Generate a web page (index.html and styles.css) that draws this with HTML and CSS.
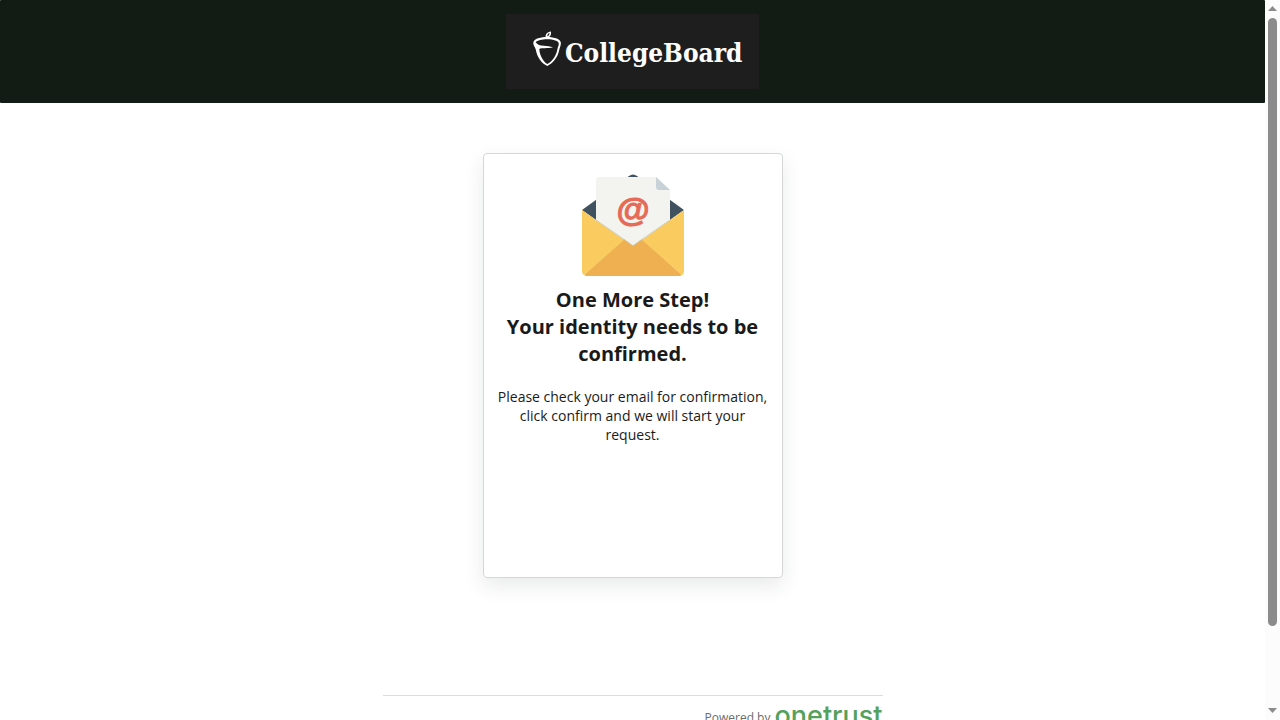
FILE: index.html
```html
<!DOCTYPE html>
<html lang="en">
<head>
<meta charset="utf-8">
<title>Identity confirmation</title>
<link rel="stylesheet" href="styles.css">
</head>
<body>
<div class="page">
  <header class="header">
    <div class="brand">
      <svg class="brand-icon" viewBox="0 0 28 36" aria-hidden="true">
        <path fill="#fff" d="M12.600 6.500C12.200 3 14 1 18 .4c.5 3.200-.8 5.200-3 6.100z"/>
        <path fill="#1e1e1e" d="M14.300 5.200C14.300 3.600 15 2.500 16.500 2c.1 1.500-.7 2.600-2.200 3.200z"/>
        <path fill="#fff" d="M14 6C22 6 27.900 8.300 27.900 12.100c0 2.700-1.100 4.200-1.600 6.700C24.900 26.500 19.800 32.500 14.300 35 8.600 32.500 4.200 26.500 2.800 18.800 2.300 16.300.3 15 .3 12.100.3 8.300 6 6 14 6z"/>
        <path fill="#1e1e1e" d="M2.600 11.200C4.500 9.300 9 8.300 14 8.300c6.500 0 11.800 1.500 11.800 4.500 0 1.700-.9 3-1.400 5.400C23.200 25 19.100 30.500 14.300 33 10.200 30.500 6.500 24 6.300 18c2.500-1.300 8-.3 13.700-1.400-2.500-1.500-6-1.600-9.200-1.800C7 14.500 4.500 13.800 2.600 11.200z"/>
      </svg>
      <span class="brand-name">CollegeBoard</span>
    </div>
  </header>
  <main class="main">
    <section class="card">
      <svg class="envelope" viewBox="0 0 102 102" aria-hidden="true">
        <path fill="#40525f" d="M0 36 47 2q4-3 8 0l47 34-51 36z"/>
        <path fill="#f3f4ef" d="M17 3h57l14 13v30L51 72 14 46V6q0-3 3-3z"/>
        <path fill="#c9d1d8" d="M74 3l14 13H77q-3 0-3-3z"/>
        <text class="at-sign" x="51" y="47" text-anchor="middle">@</text>
        <path fill="#efb051" d="M2 101 42 65l9 7 9-7 40 36-2 1H4z"/>
        <path fill="#facb5f" d="M0 36 42 66 2 101q-2-1-2-4zM102 36 60 66l40 35q2-1 2-4z"/>
        <path fill="none" stroke="#c9cbc4" stroke-width=".7" d="M14 46 51 71.500 88 46"/>
      </svg>
      <h1 class="title">One More Step!<br>Your identity needs to be confirmed.</h1>
      <p class="message">Please check your email for confirmation, click confirm and we will start your request.</p>
    </section>
  </main>
  <footer class="footer">
    <span class="powered">Powered by</span>
    <span class="vendor">onetrust</span>
  </footer>
</div>
<div class="scrollbar" aria-hidden="true">
  <svg class="arrow" viewBox="0 0 9 5"><path d="M0 5 4.500 0 9 5z"/></svg>
  <div class="track"><div class="thumb"></div></div>
  <svg class="arrow" viewBox="0 0 9 5"><path d="M0 0h9L4.500 5z"/></svg>
</div>
</body>
</html>
```
FILE: styles.css
```css
* { box-sizing: border-box; }

body {
  margin: 0;
  height: 100vh;
  overflow: hidden;
  display: flex;
  font-family: "Open Sans", sans-serif;
  color: #1a1a1a;
  background: #fff;
}

.page { flex: 1; overflow: hidden; }

.header {
  display: flex;
  justify-content: center;
  padding: 14px;
  background: #131c14;
  border-radius: 1px;
}

.brand {
  display: flex;
  width: 253px;
  height: 75px;
  padding: 17px 0 0 27px;
  gap: 4px;
  background: #1e1e1e;
}

.brand-icon { width: 28px; height: 36px; }

.brand-name {
  font: bold 26px/44px "DejaVu Serif Condensed", "DejaVu Serif", serif;
  color: #fff;
}

.main {
  display: flex;
  justify-content: center;
  padding: 50px 0 117px;
}

.card {
  width: 300px;
  min-height: 425px;
  padding: 20px 12px;
  text-align: center;
  border: 1px solid #d5d6d8;
  border-radius: 4px;
  box-shadow: 0 8px 20px rgba(40, 50, 60, 0.1);
}

.envelope { display: block; width: 102px; height: 102px; margin: 0 auto; }

.at-sign {
  font: bold 34px "Liberation Sans", sans-serif;
  fill: #e66a57;
  stroke: #e66a57;
  stroke-width: 1px;
}

.title { margin: 10px 0 20px; font-size: 20px; line-height: 27px; font-weight: 700; }

.message { margin: 0; font-size: 14px; line-height: 19px; }

.footer {
  display: flex;
  justify-content: flex-end;
  gap: 4px;
  max-width: 500px;
  margin: 0 auto;
  padding-top: 4px;
  border-top: 1px solid #dcdcdc;
}

.powered { font-size: 12px; line-height: 36px; color: #6b6b6b; }

.vendor { font: 500 27px/32px Inter, sans-serif; color: #54a15d; }

.scrollbar {
  display: flex;
  flex-direction: column;
  align-items: center;
  gap: 7px;
  width: 15px;
  padding: 6px 0 7px;
  background: #fcfcfc;
}

.arrow { width: 9px; height: 5px; fill: #8b8b8b; }

.track { flex: 1; width: 9px; }

.thumb { height: 89%; border-radius: 5px; background: #8b8b8b; }
```
